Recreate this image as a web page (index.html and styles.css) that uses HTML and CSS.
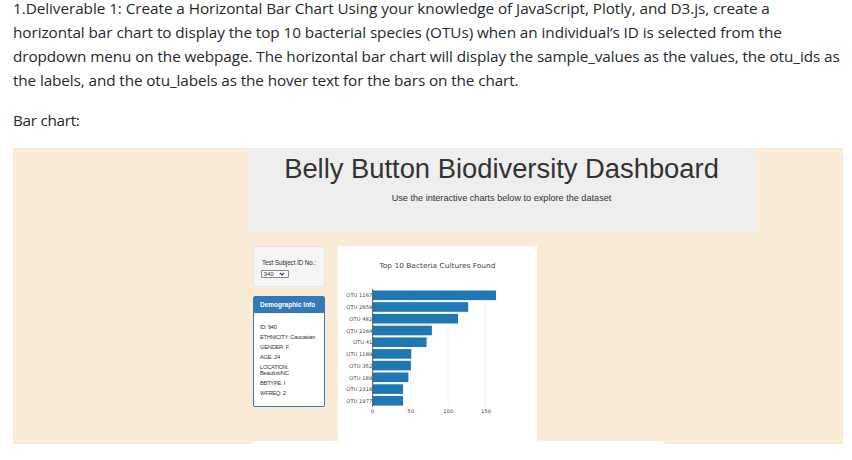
FILE: index.html
```html
<!DOCTYPE html>
<html lang="en">
<head>
<meta charset="utf-8">
<title>Belly Button Biodiversity</title>
<link rel="stylesheet" href="styles.css">
</head>
<body>
<main class="readme">
  <p class="copy"><span class="l1">1.Deliverable 1: Create a Horizontal Bar Chart Using your knowledge of JavaScript, Plotly, and D3.js, create a</span><span class="l2">horizontal bar chart to display the top 10 bacterial species (OTUs) when an individual’s ID is selected from the</span><span class="l3">dropdown menu on the webpage. The horizontal bar chart will display the sample_values as the values, the otu_ids as</span><span class="l4">the labels, and the otu_labels as the hover text for the bars on the chart.</span></p>
  <p class="copy"><span class="l5">Bar chart:</span></p>
  <section class="dashboard">
    <header class="jumbotron">
      <h1>Belly Button Biodiversity Dashboard</h1>
      <p>Use the interactive charts below to explore the dataset</p>
    </header>
    <div class="row">
      <aside class="side">
        <div class="well">
          <div class="label">Test Subject ID No.:</div>
          <div class="select"><span>940</span><svg width="6" height="4" viewBox="0 0 6 4"><path d="M.7.8 3 3 5.3.8" fill="none" stroke="#333" stroke-width="1.1"/></svg></div>
        </div>
        <div class="panel">
          <h3>Demographic Info</h3>
          <div class="facts">
            <p>ID: 940</p>
            <p>ETHNICITY: Caucasian</p>
            <p>GENDER: F</p>
            <p>AGE: 24</p>
            <p>LOCATION:<br>Beaufort/NC</p>
            <p>BBTYPE: I</p>
            <p>WFREQ: 2</p>
          </div>
        </div>
      </aside>
      <svg class="plot" width="199" height="195" viewBox="338 246 199 195">
        <text class="title" x="379.5" y="267.7" textLength="116" lengthAdjust="spacingAndGlyphs">Top 10 Bacteria Cultures Found</text>
        <path d="M410.5 289v117M448.1 289v117M485.5 289v117" stroke="#eee" stroke-width=".7"/>
        <g class="bars">
          <rect x="372.7" y="290.5" width="123.3" height="9.6"/>
          <rect x="372.7" y="302.2" width="95.5" height="9.6"/>
          <rect x="372.7" y="313.9" width="85.3" height="9.6"/>
          <rect x="372.7" y="325.7" width="59.2" height="9.6"/>
          <rect x="372.7" y="337.4" width="53.9" height="9.6"/>
          <rect x="372.7" y="349.1" width="38.6" height="9.6"/>
          <rect x="372.7" y="360.8" width="38.2" height="9.6"/>
          <rect x="372.7" y="372.5" width="35.7" height="9.6"/>
          <rect x="372.7" y="384.3" width="30.4" height="9.6"/>
          <rect x="372.7" y="396" width="30.4" height="9.6"/>
        </g>
        <path d="M372.7 289v118" stroke="#444" stroke-width=".9"/>
        <g class="ticks">
          <text x="346.3" y="297.2" textLength="26">OTU 1167</text>
          <text x="346.3" y="309.2" textLength="26">OTU 2859</text>
          <text x="349.3" y="320.9" textLength="23">OTU 482</text>
          <text x="346.3" y="332.7" textLength="26">OTU 2264</text>
          <text x="353" y="344" textLength="19.3">OTU 41</text>
          <text x="346.3" y="356.2" textLength="26">OTU 1189</text>
          <text x="349.3" y="367.9" textLength="23">OTU 352</text>
          <text x="349.3" y="379.6" textLength="23">OTU 189</text>
          <text x="346.3" y="391.2" textLength="26">OTU 2318</text>
          <text x="346.3" y="403" textLength="26">OTU 1977</text>
          <text x="371" y="412.5">0</text>
          <text x="407.2" y="412.5" textLength="7">50</text>
          <text x="443.3" y="412.5" textLength="10">100</text>
          <text x="481" y="412.5" textLength="10">150</text>
        </g>
      </svg>
    </div>
    <div class="next"></div>
  </section>
</main>
</body>
</html>
```
FILE: styles.css
```css
body { margin: 0; background: #fff; overflow: hidden; }
.readme { margin-left: 13px; width: 830px; }
.copy { margin: 0 0 16px; font: 15.3px/24px "Open Sans", sans-serif; color: #24292f; white-space: nowrap; }
.copy span { display: block; }
.copy .l1 { line-height: 16px; padding-bottom: 4px; letter-spacing: -.055px; }
.l2 { letter-spacing: -.063px; }
.l3 { letter-spacing: -.087px; }
.l4 { letter-spacing: -.107px; }
.l5 { letter-spacing: -.3px; }
.dashboard { height: 296px; background: #faebd7; font-family: "Liberation Sans", sans-serif; color: #333; display: flex; flex-direction: column; overflow: hidden; }
.jumbotron { height: 85px; width: 508px; margin-left: 234.5px; background: #eee; border-radius: 0 0 2px 2px; text-align: center; flex: none; }
.jumbotron h1 { margin: 0; padding-top: 3px; font-size: 27.35px; line-height: 36px; font-weight: 400; white-space: nowrap; }
.jumbotron p { margin: 5px 0 0; font-size: 9.15px; line-height: 12px; }
.row { display: flex; gap: 13px; margin: 13px 0 0 240px; height: 195px; flex: none; }
.side { width: 72px; }
.well { box-sizing: border-box; height: 41px; background: #f5f5f5; border: 1px solid #e6e6e6; border-radius: 2px; padding: 12px 0 0 8px; font-size: 6.3px; line-height: 8px; white-space: nowrap; }
.label { width: 54px; letter-spacing: -.08px; }
.select { box-sizing: border-box; width: 28px; height: 8px; margin-top: 3px; margin-left: -1px; border: 1px solid #888; border-radius: 1px; background: #fff; display: flex; align-items: center; justify-content: space-between; padding: 0 3px 0 2px; font-size: 5.8px; line-height: 6px; }
.panel { box-sizing: border-box; margin-top: 9px; height: 111px; background: #fff; border: 1px solid #337ab7; border-radius: 2px; }
.panel h3 { margin: 0; height: 16px; padding-left: 6px; background: #337ab7; color: #fff; font-size: 6.5px; line-height: 15px; white-space: nowrap; }
.facts { padding: 11px 0 0 6px; font-size: 5.7px; letter-spacing: -.23px; line-height: 6px; white-space: nowrap; }
.facts p { margin: 0 0 3.95px; }
.plot { display: block; background: #fff; font-family: "DejaVu Sans", sans-serif; }
.title { font-size: 7px; fill: #444; }
.bars rect { fill: #1f77b4; }
.ticks text { font-size: 5.2px; fill: #444; }
.next { height: 3px; width: 411px; margin-left: 240px; background: #fff; flex: none; }
```
